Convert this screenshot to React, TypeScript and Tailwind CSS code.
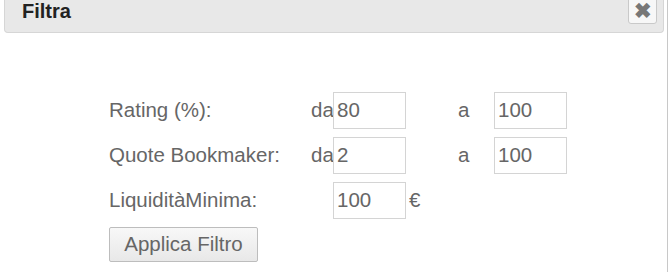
import React from "react";

const Field = ({ value }: { value: string }) => (
  <div className="w-[73px] h-[37px] border border-[#d4d4d4] bg-white flex items-center pl-[3px] text-[#666]">
    {value}
  </div>
);

export default function App() {
  return (
    <div className="w-[669px] h-[272px] bg-white relative overflow-hidden [font-family:'Liberation_Sans',Arial,sans-serif]">
      <div className="h-full border-r border-[#c8c8c8] pr-[3px] pl-[4px] mr-[1px]">
        <div className="h-[33px] bg-[#e8e8e8] border border-t-0 border-[#d6d6d6] rounded-b-[4px] flex items-center justify-between pl-[17px] pr-[6px]">
          <span className="text-[20px] font-bold text-[#222] -mt-[10px]">Filtra</span>
          <button className="w-[29px] h-[28px] -mt-[12px] bg-[#f7f7f7] border border-[#c9c9c9] rounded-[3px] flex items-center justify-center text-[#777] text-[21px] leading-none font-bold">
            ✖
          </button>
        </div>
        <div className="pl-[105px] pt-[59px] text-[20.5px] text-[#666]">
          <div className="flex flex-col gap-[8px]">
            <div className="flex items-center h-[37px]">
              <span className="w-[202px]">Rating (%):</span>
              <span className="w-[22px]">da</span>
              <Field value="80" />
              <span className="w-[88px] pl-[52px]">a</span>
              <Field value="100" />
            </div>
            <div className="flex items-center h-[37px]">
              <span className="w-[202px]">Quote Bookmaker:</span>
              <span className="w-[22px]">da</span>
              <Field value="2" />
              <span className="w-[88px] pl-[52px]">a</span>
              <Field value="100" />
            </div>
            <div className="flex items-center h-[37px]">
              <span className="w-[224px]">LiquiditàMinima:</span>
              <Field value="100" />
              <span className="pl-[3px]">€</span>
            </div>
          </div>
          <button className="mt-[8px] w-[149px] h-[35px] border border-[#bdbdbd] bg-gradient-to-b from-[#f8f8f8] to-[#e8e8e8] rounded-[2px] text-[#666] text-[20.5px]">
            Applica Filtro
          </button>
        </div>
      </div>
    </div>
  );
}
